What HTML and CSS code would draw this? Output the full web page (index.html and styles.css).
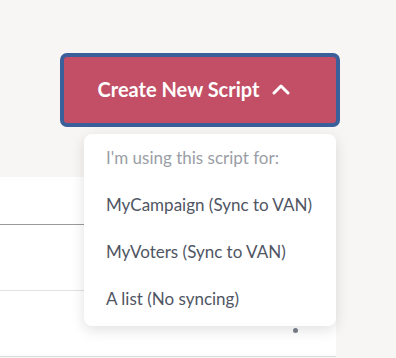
FILE: index.html
```html
<!DOCTYPE html>
<html lang="en">
<head>
    <meta charset="UTF-8">
    <meta name="viewport" content="width=device-width, initial-scale=1.0">
    <title>Scripts</title>
    <link rel="stylesheet" href="styles.css">
</head>
<body>
    <div class="page">
        <div class="toolbar">
            <button class="btn-create">
                <span>Create New Script</span>
                <svg class="chevron" width="18" height="12" viewBox="0 0 18 12">
                    <path d="M2 10 L9 3 L16 10" fill="none" stroke="#fff" stroke-width="3" stroke-linecap="round" stroke-linejoin="round"/>
                </svg>
            </button>
        </div>

        <div class="panel">
            <div class="row row-first"></div>
            <div class="row"></div>
            <div class="row row-last">
                <span class="dot"></span>
            </div>
        </div>

        <div class="dropdown">
            <div class="dropdown-title">I'm using this script for:</div>
            <div class="dropdown-item">MyCampaign (Sync to VAN)</div>
            <div class="dropdown-item">MyVoters (Sync to VAN)</div>
            <div class="dropdown-item">A list (No syncing)</div>
        </div>
    </div>
</body>
</html>
```

FILE: styles.css
```css
body {
    margin: 0;
    padding: 0;
    background-color: #f7f6f4;
    font-family: 'Lato', 'Open Sans', sans-serif;
    overflow: hidden;
}
.page {
    position: relative;
    width: 396px;
    height: 358px;
}
.toolbar {
    padding: 53px 0 0 60px;
    height: 177px;
    box-sizing: border-box;
}
.btn-create {
    display: flex;
    align-items: center;
    justify-content: center;
    gap: 13px;
    width: 280px;
    height: 74px;
    padding: 0 12px 2px 0;
    background-color: #c24f66;
    border: 4px solid #3b5f9b;
    border-radius: 7px;
    color: #fff;
    font-family: inherit;
    font-size: 20px;
    font-weight: bold;
    cursor: pointer;
}
.chevron {
    display: block;
}
.panel {
    width: 336px;
    background-color: #fff;
}
.row {
    height: 65px;
    border-bottom: 1px solid #e2e2e2;
}
.row-first {
    height: 47px;
    border-bottom-color: #9b9b9b;
}
.row-last {
    position: relative;
    border-bottom-color: #dcdcdc;
}
.dot {
    position: absolute;
    left: 293px;
    top: 37px;
    width: 5px;
    height: 5px;
    border-radius: 50%;
    background-color: #7b818c;
}
.dropdown {
    position: absolute;
    left: 84px;
    top: 134px;
    width: 252px;
    height: 192px;
    box-sizing: border-box;
    padding: 12px 0 0 22px;
    background-color: #fff;
    border-radius: 8px;
    box-shadow: 0 4px 14px rgba(0, 0, 0, 0.12);
}
.dropdown-title {
    height: 47px;
    line-height: 24px;
    font-size: 17px;
    color: #9a9ea6;
}
.dropdown-item {
    height: 47px;
    line-height: 24px;
    font-size: 17px;
    color: #4f5563;
}
```
